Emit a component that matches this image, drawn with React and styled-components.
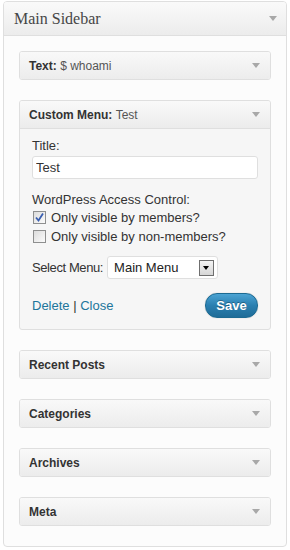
import styled, { createGlobalStyle } from 'styled-components'

const Global = createGlobalStyle`
    body {
        margin: 0;
        background: #fff;
        font-family: "Liberation Sans", Arial, sans-serif;
        font-size: 13px;
        color: #333;
    }
`

const closedWidgets = ['Recent Posts', 'Categories', 'Archives', 'Meta']

const App = () => {
    return (
        <>
            <Global />
            <Sidebar>
                <SidebarHeader>
                    <SidebarTitle>Main Sidebar</SidebarTitle>
                    <Arrow />
                </SidebarHeader>
                <SidebarBody>
                    <Widget>
                        <WidgetTop>
                            <WidgetTitle>Text: <Instance>$ whoami</Instance></WidgetTitle>
                            <Arrow />
                        </WidgetTop>
                    </Widget>

                    <Widget $open>
                        <WidgetTop $open>
                            <WidgetTitle>Custom Menu: <Instance>Test</Instance></WidgetTitle>
                            <Arrow />
                        </WidgetTop>
                        <WidgetInside>
                            <Label>Title:</Label>
                            <TextInput type="text" defaultValue="Test" />

                            <Label $spaced>WordPress Access Control:</Label>
                            <CheckRow>
                                <CheckBox><Check checked /></CheckBox>
                                Only visible by members?
                            </CheckRow>
                            <CheckRow>
                                <CheckBox><Check /></CheckBox>
                                Only visible by non-members?
                            </CheckRow>

                            <SelectRow>
                                <SelectLabel>Select Menu:</SelectLabel>
                                <SelectBox>
                                    Main Menu
                                    <SelectButton />
                                </SelectBox>
                            </SelectRow>

                            <Controls>
                                <Links>
                                    <LinkText href="#">Delete</LinkText> | <LinkText href="#">Close</LinkText>
                                </Links>
                                <SaveButton>Save</SaveButton>
                            </Controls>
                        </WidgetInside>
                    </Widget>

                    {closedWidgets.map(name => (
                        <Widget key={name}>
                            <WidgetTop>
                                <WidgetTitle>{name}</WidgetTitle>
                                <Arrow />
                            </WidgetTop>
                        </Widget>
                    ))}
                </SidebarBody>
            </Sidebar>
        </>
    )
}

export default App

const Check = ({ checked }) => checked ? (
    <svg width="11" height="11" viewBox="0 0 11 11">
        <path d="M2 5.5 L4.5 8.5 L9 1.5" fill="none" stroke="#3a5fb0" strokeWidth="1.8" />
    </svg>
) : null

const Sidebar = styled.div`
    box-sizing: border-box;
    width: 284px;
    height: 546px;
    margin: 1px 0 0 3px;
    border: 1px solid #dfdfdf;
    border-radius: 4px;
    background: #fcfcfc;
    overflow: hidden;
`

const SidebarHeader = styled.div`
    display: flex;
    align-items: center;
    justify-content: space-between;
    height: 33px;
    padding: 0 9px 0 10px;
    border-bottom: 1px solid #dfdfdf;
    background: linear-gradient(#fafafa, #ececec);
`

const SidebarTitle = styled.h3`
    margin: 0;
    font-family: "Liberation Serif", Georgia, serif;
    font-size: 16px;
    font-weight: normal;
    color: #464646;
`

const Arrow = styled.span`
    width: 0;
    height: 0;
    border-left: 4px solid transparent;
    border-right: 4px solid transparent;
    border-top: 5px solid #a8a8a8;
`

const SidebarBody = styled.div`
    display: flex;
    flex-direction: column;
    gap: 20px;
    padding: 15px;
`

const Widget = styled.div`
    border: 1px solid #dfdfdf;
    border-radius: 3px;
    background: ${p => p.$open ? '#f6f6f6' : 'transparent'};
    overflow: hidden;
`

const WidgetTop = styled.div`
    display: flex;
    align-items: center;
    justify-content: space-between;
    height: 27px;
    padding: 0 10px 0 9px;
    background: linear-gradient(#f9f9f9, #ececec);
    border-bottom: ${p => p.$open ? '1px solid #dfdfdf' : 'none'};
`

const WidgetTitle = styled.h4`
    margin: 0;
    font-size: 12px;
    font-weight: bold;
    color: #333;
`

const Instance = styled.span`
    font-weight: normal;
    color: #555;
`

const WidgetInside = styled.div`
    display: flex;
    flex-direction: column;
    padding: 9px 12px 11px 12px;
`

const Label = styled.label`
    line-height: 16px;
    margin-top: ${p => p.$spaced ? '13px' : '0'};
    color: #333;
`

const TextInput = styled.input`
    box-sizing: border-box;
    height: 23px;
    margin-top: 2px;
    padding: 0 3px;
    border: 1px solid #dfdfdf;
    border-radius: 3px;
    background: #fff;
    font-family: inherit;
    font-size: 13px;
    color: #333;
    outline: none;
`

const CheckRow = styled.div`
    display: flex;
    align-items: center;
    gap: 5px;
    height: 19px;
    padding-left: 1px;
`

const CheckBox = styled.span`
    box-sizing: border-box;
    display: flex;
    align-items: center;
    justify-content: center;
    width: 13px;
    height: 13px;
    border: 1px solid #8e8f8f;
    background: linear-gradient(135deg, #dcdcdc, #fbfbfb);
`

const SelectRow = styled.div`
    display: flex;
    align-items: center;
    gap: 4px;
    margin-top: 10px;
`

const SelectLabel = styled.span`
    letter-spacing: -0.4px;
`

const SelectBox = styled.div`
    box-sizing: border-box;
    display: flex;
    align-items: center;
    justify-content: space-between;
    width: 111px;
    height: 23px;
    padding: 0 3px 0 6px;
    border: 1px solid #dfdfdf;
    border-radius: 3px;
    background: #fff;
    color: #222;
`

const SelectButton = styled.span`
    position: relative;
    box-sizing: border-box;
    width: 15px;
    height: 16px;
    border: 1px solid #6f6f6f;
    background: linear-gradient(#f4f4f4, #d6d6d6);

    &::after {
        content: '';
        position: absolute;
        left: 3px;
        top: 5px;
        border-left: 3.5px solid transparent;
        border-right: 3.5px solid transparent;
        border-top: 4px solid #000;
    }
`

const Controls = styled.div`
    display: flex;
    align-items: center;
    justify-content: space-between;
    margin-top: 14px;
`

const Links = styled.div`
    color: #333;
`

const LinkText = styled.a`
    color: #21759b;
    text-decoration: none;
`

const SaveButton = styled.button`
    box-sizing: border-box;
    width: 53px;
    height: 25px;
    border: 1px solid #1c6a92;
    border-radius: 12px;
    background: linear-gradient(#4ba3d3, #2a7fb0 50%, #1f6c98);
    box-shadow: 0 0 1px rgba(0, 0, 0, 0.3);
    font-family: inherit;
    font-size: 13px;
    font-weight: bold;
    color: #fff;
    text-shadow: 0 -1px 0 rgba(0, 0, 0, 0.3);
    cursor: pointer;
`
